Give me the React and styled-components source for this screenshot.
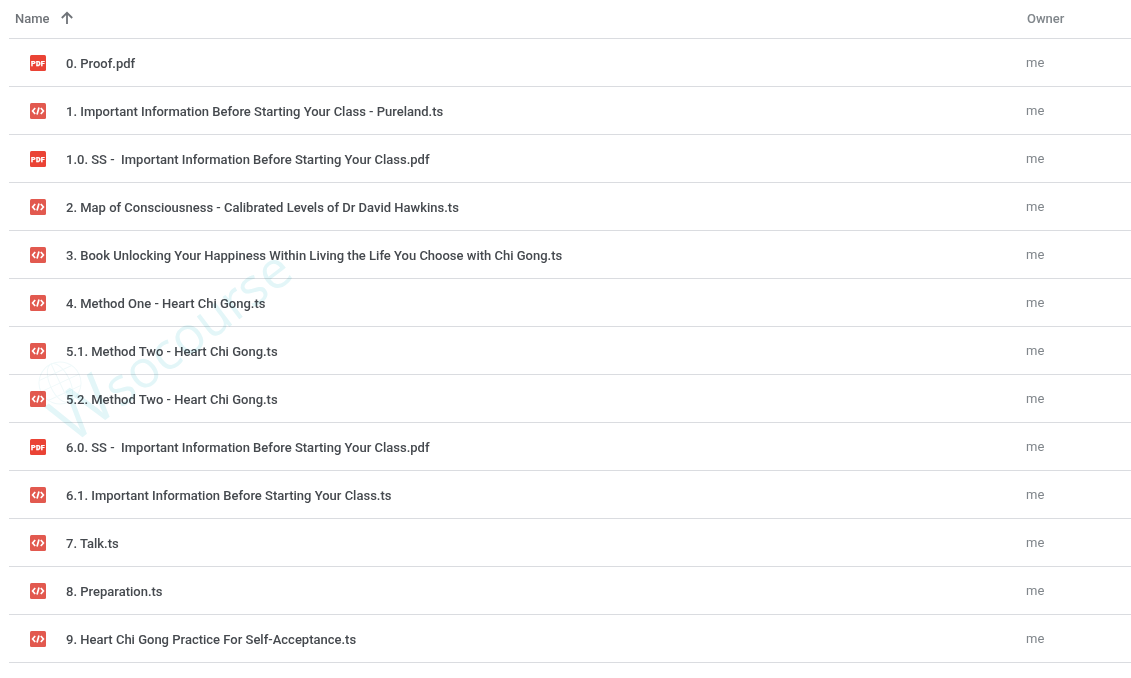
import React from "react";
import styled, { createGlobalStyle } from "styled-components";

const files = [
  { name: "0. Proof.pdf", type: "pdf" },
  { name: "1. Important Information Before Starting Your Class - Pureland.ts", type: "code" },
  { name: "1.0. SS -  Important Information Before Starting Your Class.pdf", type: "pdf" },
  { name: "2. Map of Consciousness - Calibrated Levels of Dr David Hawkins.ts", type: "code" },
  { name: "3. Book Unlocking Your Happiness Within Living the Life You Choose with Chi Gong.ts", type: "code" },
  { name: "4. Method One - Heart Chi Gong.ts", type: "code" },
  { name: "5.1. Method Two - Heart Chi Gong.ts", type: "code" },
  { name: "5.2. Method Two - Heart Chi Gong.ts", type: "code" },
  { name: "6.0. SS -  Important Information Before Starting Your Class.pdf", type: "pdf" },
  { name: "6.1. Important Information Before Starting Your Class.ts", type: "code" },
  { name: "7. Talk.ts", type: "code" },
  { name: "8. Preparation.ts", type: "code" },
  { name: "9. Heart Chi Gong Practice For Self-Acceptance.ts", type: "code" }
];

const GlobalStyle = createGlobalStyle`
  html, body {
    margin: 0;
    background: #fff;
    overflow: hidden;
  }
  body {
    font-family: Roboto, "Liberation Sans", sans-serif;
  }
`;

const Page = styled.div`
  position: relative;
  width: 1131px;
  height: 678px;
  padding-left: 9px;
  box-sizing: border-box;
  overflow: hidden;
`;

const HeaderRow = styled.div`
  display: flex;
  align-items: center;
  height: 36px;
  padding-bottom: 2px;
  border-bottom: 1px solid #dadce0;
`;

const NameHeading = styled.div`
  flex: 0 0 1018px;
  display: flex;
  align-items: center;
  gap: 10px;
  padding-left: 6px;
  box-sizing: border-box;
  font-size: 13px;
  font-weight: 500;
  color: #6f7378;
`;

const OwnerHeading = styled.div`
  font-size: 13px;
  font-weight: 500;
  color: #80868b;
`;

const Row = styled.div`
  display: flex;
  align-items: center;
  height: 47px;
  border-bottom: 1px solid #dadce0;
`;

const IconCell = styled.div`
  flex: 0 0 57px;
  display: flex;
  padding-left: 21px;
  box-sizing: border-box;
`;

const FileName = styled.div`
  flex: 0 0 960px;
  padding-top: 2px;
  font-size: 13px;
  font-weight: 500;
  color: #45494e;
  white-space: pre;
`;

const Owner = styled.div`
  font-size: 13px;
  color: #80868b;
`;

const WatermarkText = styled.div`
  position: absolute;
  left: 58px;
  top: 396px;
  line-height: 56px;
  font-size: 52px;
  font-weight: 500;
  font-family: "Open Sans", sans-serif;
  color: #e3f6f8;
  transform: rotate(-37deg);
  transform-origin: 0 50%;
  white-space: nowrap;
  mix-blend-mode: multiply;
  pointer-events: none;
`;

const WatermarkInitial = styled.span`
  font-size: 66px;
  font-weight: 400;
`;

const WatermarkGlobe = styled.svg`
  position: absolute;
  left: 37px;
  top: 360px;
  mix-blend-mode: multiply;
  pointer-events: none;
`;

const UpArrow = () => (
  <svg width="14" height="14" viewBox="0 0 14 14">
    <path d="M7 13V2M1.8 7 7 1.8 12.2 7" fill="none" stroke="#6f7378" strokeWidth="1.8" />
  </svg>
);

const PdfIcon = () => (
  <svg width="16" height="16" viewBox="0 0 16 16">
    <rect width="16" height="16" rx="1.5" fill="#ea4335" />
    <text
      x="8"
      y="10.7"
      textAnchor="middle"
      fontSize="7"
      fontWeight="900"
      letterSpacing="0.3"
      fontFamily="Roboto, sans-serif"
      fill="#fff"
      stroke="#fff"
      strokeWidth="0.25"
    >
      PDF
    </text>
  </svg>
);

const CodeIcon = () => (
  <svg width="16" height="16" viewBox="0 0 16 16">
    <rect width="16" height="16" rx="1.5" fill="#e2594f" />
    <path d="M5.2 5 2.6 8l2.6 3M10.8 5l2.6 3-2.6 3M9 4.4 7 11.6" fill="none" stroke="#fff" strokeWidth="1.7" />
  </svg>
);

const Globe = () => (
  <WatermarkGlobe width="46" height="46" viewBox="0 0 46 46">
    <g fill="none" stroke="#f0f9fa" strokeWidth="1" transform="rotate(-25 23 23)">
      <circle cx="23" cy="23" r="21" />
      <ellipse cx="23" cy="23" rx="10" ry="21" />
      <path d="M23 2v42M2 23h42M5 12h36M5 34h36" />
    </g>
  </WatermarkGlobe>
);

export default function App() {
  return (
    <Page>
      <GlobalStyle />
      <HeaderRow>
        <NameHeading>
          Name
          <UpArrow />
        </NameHeading>
        <OwnerHeading>Owner</OwnerHeading>
      </HeaderRow>
      {files.map((file) => (
        <Row key={file.name}>
          <IconCell>{file.type === "pdf" ? <PdfIcon /> : <CodeIcon />}</IconCell>
          <FileName>{file.name}</FileName>
          <Owner>me</Owner>
        </Row>
      ))}
      <Globe />
      <WatermarkText>
        <WatermarkInitial>W</WatermarkInitial>socourse
      </WatermarkText>
    </Page>
  );
}
